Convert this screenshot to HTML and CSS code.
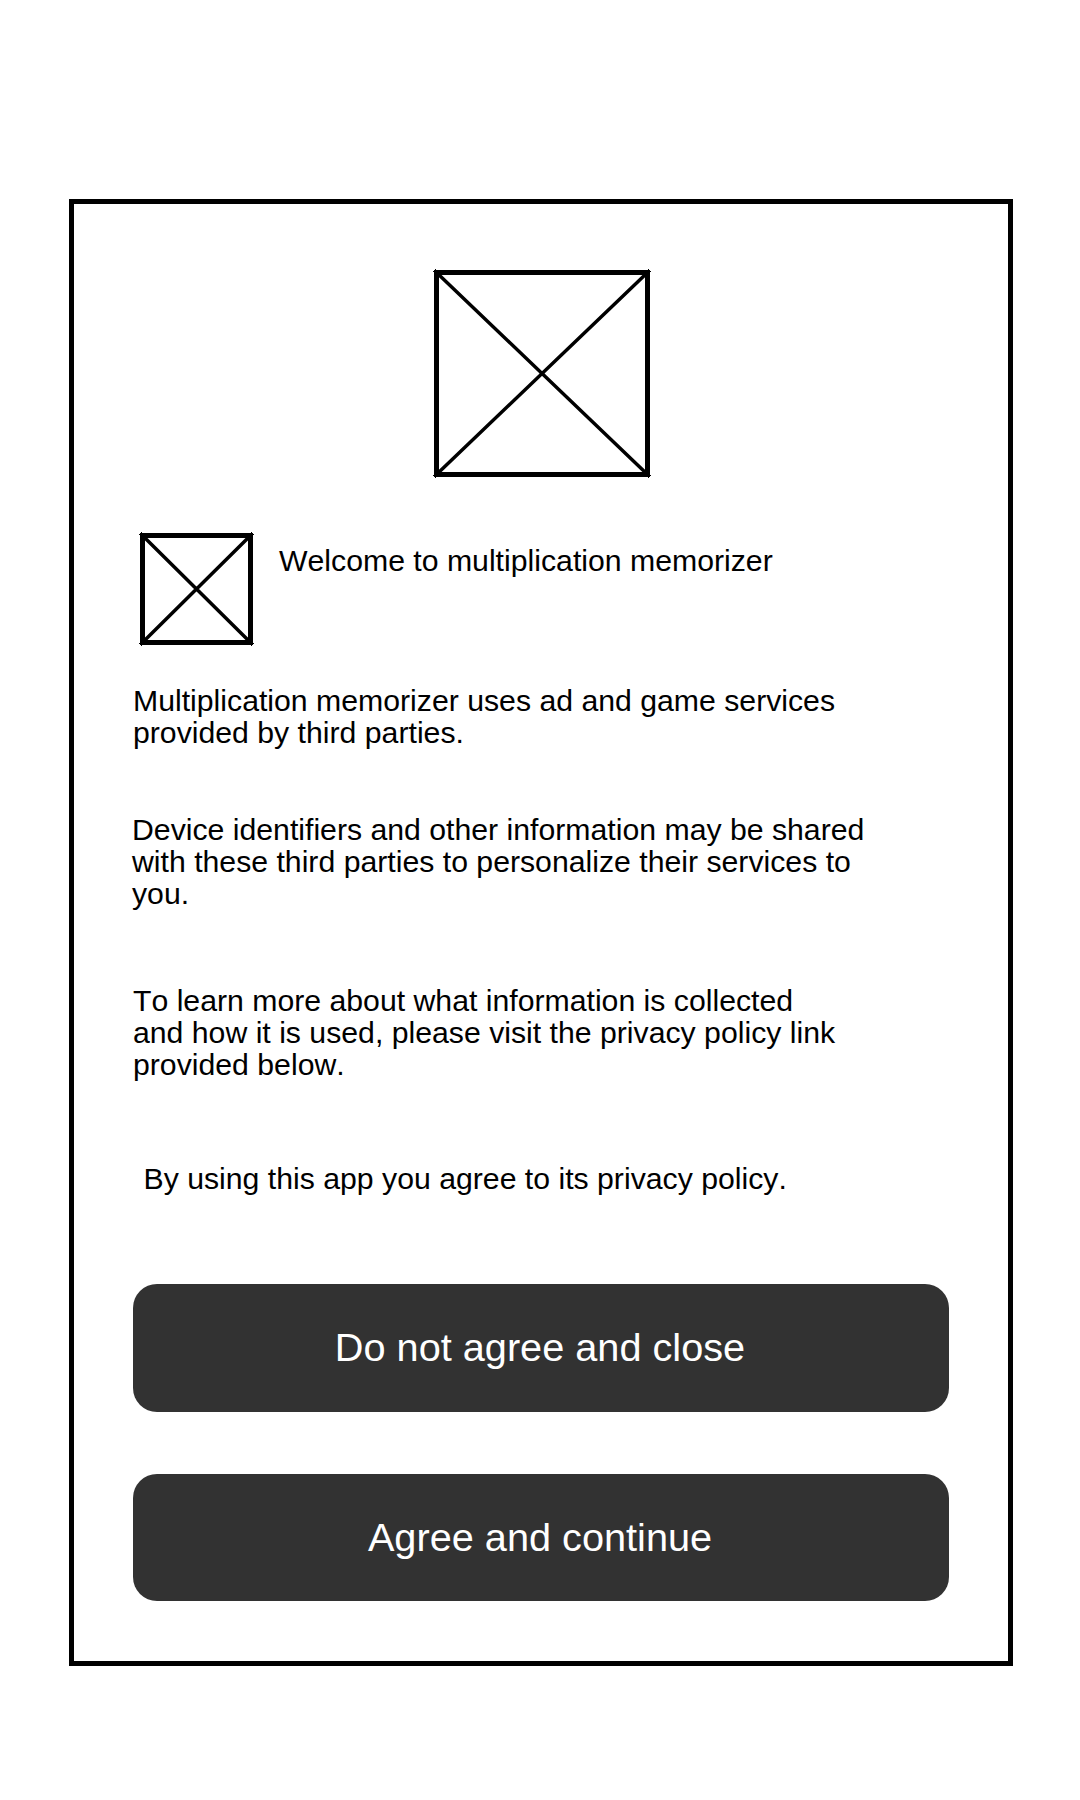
FILE: index.html
```html
<!DOCTYPE html>
<html lang="en">
<head>
<meta charset="utf-8">
<title>Multiplication memorizer</title>
<link rel="stylesheet" href="styles.css">
</head>
<body>
<main class="dialog">
  <svg class="hero" width="218" height="209" viewBox="0 0 218 209" aria-hidden="true">
    <rect class="box" x="3.5" y="3.5" width="211" height="202"/>
    <path class="cross" d="M3.5 3.5L214.5 205.5M214.5 3.5L3.5 205.5"/>
    <path class="ticks" d="M0 2.5H4M2.5 0V4M214 2.5H218M215.5 0V4M0 206.5H4M2.5 205V209M214 206.5H218M215.5 205V209"/>
  </svg>
  <header class="intro">
    <svg class="logo" width="115" height="114" viewBox="0 0 115 114" aria-hidden="true">
      <rect class="box" x="3.5" y="3.5" width="108" height="107"/>
      <path class="cross" d="M3.5 3.5L111.5 110.5M111.5 3.5L3.5 110.5"/>
      <path class="ticks" d="M0 2.5H4M2.5 0V4M111 2.5H115M112.5 0V4M0 111.5H4M2.5 110V114M111 111.5H115M112.5 110V114"/>
    </svg>
    <h1 class="title">Welcome to multiplication memorizer</h1>
  </header>
  <p class="text services">Multiplication memorizer uses ad and game services<br>provided by third parties.</p>
  <p class="text sharing">Device identifiers and other information may be shared<br>with these third parties to personalize their services to<br>you.</p>
  <p class="text learn">To learn more about what information is collected<br>and how it is used, please visit the privacy policy link<br>provided below.</p>
  <p class="text consent">By using this app you agree to its privacy policy.</p>
  <div class="actions">
    <button class="button">Do not agree and close</button>
    <button class="button button-agree">Agree and continue</button>
  </div>
</main>
</body>
</html>
```
FILE: styles.css
```css
* {
  box-sizing: border-box;
}

body {
  margin: 0;
  padding: 199px 67px 134px 69px;
  background: #fff;
  color: #000;
  font-family: "Liberation Sans", Arial, sans-serif;
}

.dialog {
  display: flex;
  flex-direction: column;
  height: 1467px;
  padding: 65px 59px 0;
  border: 5px solid #000;
}

.hero,
.logo {
  display: block;
  flex: none;
  fill: none;
  stroke: #000;
}

.hero {
  margin-left: 300px;
}

.box {
  stroke-width: 5;
}

.cross {
  stroke-width: 3.5;
}

.ticks {
  stroke-width: 1;
}

.intro {
  display: flex;
  align-items: flex-start;
  gap: 25px;
  margin: 54px 0 0 6px;
}

.title,
.text {
  margin: 0;
  font-size: 30.22px;
  font-weight: 400;
  font-kerning: none;
  line-height: 32px;
  white-space: nowrap;
}

.title {
  padding-top: 13px;
}

.services {
  margin-top: 39px;
}

.sharing {
  margin: 65px 0 0 -1px;
}

.learn {
  margin-top: 75px;
}

.consent {
  margin: 82px 0 0 10.5px;
}

.actions {
  display: flex;
  flex-direction: column;
  gap: 62px;
  width: 816px;
  margin-top: 89px;
}

.button {
  height: 128px;
  padding: 0 2px 2px 0;
  border: 0;
  border-radius: 24px;
  background: #323232;
  color: #fff;
  font: 39.7px "Liberation Sans", Arial, sans-serif;
}

.button-agree {
  height: 127px;
  padding-bottom: 0;
}
```
